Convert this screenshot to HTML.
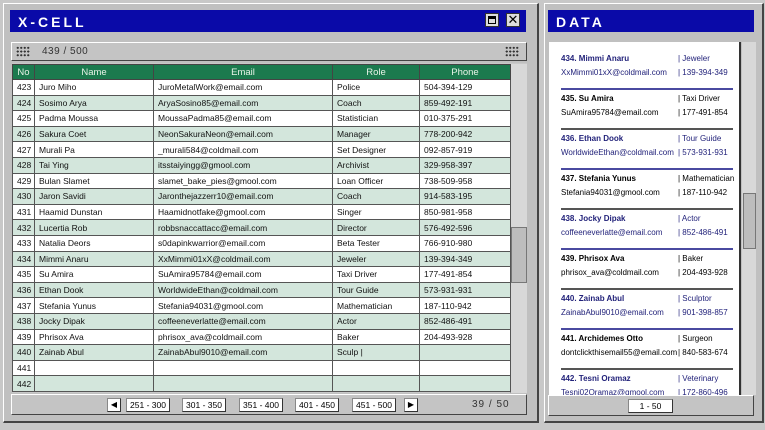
<!DOCTYPE html><html><head><style>
*{margin:0;padding:0;box-sizing:border-box}
body{width:765px;height:430px;background:#c8c8c8;font-family:"Liberation Sans",sans-serif;position:relative;overflow:hidden}
.a{position:absolute}
.win{background:#c0c0c0;border:1px solid #fff;border-right:2px solid #444;border-bottom:2px solid #444}
.title{background:#0a0aa8;color:#fff;font-weight:bold;font-size:14px;letter-spacing:3px;padding:4px 8px;font-family:"Liberation Sans",sans-serif}
table{border-collapse:collapse;font-size:8.5px;table-layout:fixed}
td{height:15.6px;border:1px solid #555;padding-left:4px;color:#111;white-space:nowrap;overflow:hidden}
th{background:#1b7a4e;color:#e8f4e8;font-weight:normal;font-size:9.5px;height:15px;border:1px solid #444}
tr.g td{background:#d3e6dc}tr.w td{background:#fff}
.btn{position:absolute;top:3px;height:14px;background:#fff;border:1px solid #888;border-right-color:#333;border-bottom-color:#333;font-size:8.5px;text-align:center;line-height:12px}
.it{position:absolute;left:12px;width:172px;font-size:8px;height:40px;border-bottom:2px solid #555}
.it.b{color:#22227a;border-bottom-color:#4a4aa0}
.it div{position:absolute;white-space:nowrap}
.grip{position:absolute;width:14px;height:11px;background-image:radial-gradient(circle,#333 1px,transparent 1.2px);background-size:3.5px 3.7px}
</style></head><body>
<div class="a win" style="left:3px;top:3px;width:536px;height:420px"></div>
<div class="a title" style="left:10px;top:10px;width:516px;height:22px">X-CELL</div>
<div class="a" style="left:485px;top:13px;width:14px;height:14px;background:#ddd;border:1px solid #333"><div class="a" style="left:2px;top:2px;width:8px;height:8px;border:1px solid #000;border-top-width:3px"></div></div>
<div class="a" style="left:506px;top:13px;width:14px;height:14px;background:#ddd;border:1px solid #333;font-size:13px;line-height:12px;text-align:center">✕</div>
<div class="a" style="left:11px;top:42px;width:516px;height:19px;background:#c4c4c4;border:1px solid #fff;border-right-color:#444;border-bottom-color:#444;font-size:10px;color:#333;line-height:17px;padding-left:30px;letter-spacing:0.5px">439 / 500</div>
<div class="grip" style="left:16px;top:46px"></div>
<div class="grip" style="left:505px;top:46px"></div>
<div class="a" style="left:12px;top:63px;width:515px;height:330px;background:#c8c8c8"></div>
<div class="a" style="left:510px;top:64px;width:17px;height:329px;background:#d8d8d8;border-left:1px solid #999"></div>
<div class="a" style="left:511px;top:227px;width:16px;height:56px;background:#bdbdbd;border:1px solid #777"></div>
<table class="a" style="left:12px;top:64px;width:498px">
<colgroup><col style="width:22px"><col style="width:119px"><col style="width:179px"><col style="width:87px"><col style="width:91px"></colgroup>
<tr><th>No</th><th>Name</th><th>Email</th><th>Role</th><th>Phone</th></tr>
<tr class="w"><td>423</td><td>Juro Miho</td><td>JuroMetalWork@email.com</td><td>Police</td><td>504-394-129</td></tr>
<tr class="g"><td>424</td><td>Sosimo Arya</td><td>AryaSosino85@email.com</td><td>Coach</td><td>859-492-191</td></tr>
<tr class="w"><td>425</td><td>Padma Moussa</td><td>MoussaPadma85@email.com</td><td>Statistician</td><td>010-375-291</td></tr>
<tr class="g"><td>426</td><td>Sakura Coet</td><td>NeonSakuraNeon@email.com</td><td>Manager</td><td>778-200-942</td></tr>
<tr class="w"><td>427</td><td>Murali Pa</td><td>_murali584@coldmail.com</td><td>Set Designer</td><td>092-857-919</td></tr>
<tr class="g"><td>428</td><td>Tai Ying</td><td>itsstaiyingg@gmool.com</td><td>Archivist</td><td>329-958-397</td></tr>
<tr class="w"><td>429</td><td>Bulan Slamet</td><td>slamet_bake_pies@gmool.com</td><td>Loan Officer</td><td>738-509-958</td></tr>
<tr class="g"><td>430</td><td>Jaron Savidi</td><td>Jaronthejazzerr10@email.com</td><td>Coach</td><td>914-583-195</td></tr>
<tr class="w"><td>431</td><td>Haamid Dunstan</td><td>Haamidnotfake@gmool.com</td><td>Singer</td><td>850-981-958</td></tr>
<tr class="g"><td>432</td><td>Lucertia Rob</td><td>robbsnaccattacc@email.com</td><td>Director</td><td>576-492-596</td></tr>
<tr class="w"><td>433</td><td>Natalia Deors</td><td>s0dapinkwarrior@email.com</td><td>Beta Tester</td><td>766-910-980</td></tr>
<tr class="g"><td>434</td><td>Mimmi Anaru</td><td>XxMimmi01xX@coldmail.com</td><td>Jeweler</td><td>139-394-349</td></tr>
<tr class="w"><td>435</td><td>Su Amira</td><td>SuAmira95784@email.com</td><td>Taxi Driver</td><td>177-491-854</td></tr>
<tr class="g"><td>436</td><td>Ethan Dook</td><td>WorldwideEthan@coldmail.com</td><td>Tour Guide</td><td>573-931-931</td></tr>
<tr class="w"><td>437</td><td>Stefania Yunus</td><td>Stefania94031@gmool.com</td><td>Mathematician</td><td>187-110-942</td></tr>
<tr class="g"><td>438</td><td>Jocky Dipak</td><td>coffeeneverlatte@email.com</td><td>Actor</td><td>852-486-491</td></tr>
<tr class="w"><td>439</td><td>Phrisox Ava</td><td>phrisox_ava@coldmail.com</td><td>Baker</td><td>204-493-928</td></tr>
<tr class="g"><td>440</td><td>Zainab Abul</td><td>ZainabAbul9010@email.com</td><td>Sculp |</td><td></td></tr>
<tr class="w"><td>441</td><td></td><td></td><td></td><td></td></tr>
<tr class="g"><td>442</td><td></td><td></td><td></td><td></td></tr>
</table>
<div class="a" style="left:11px;top:394px;width:516px;height:21px;background:#c4c4c4;border:1px solid #fff;border-right-color:#444;border-bottom-color:#444">
<div class="btn" style="left:95px;width:14px;font-size:8px">◀</div>
<div class="btn" style="left:114px;width:44px">251 - 300</div>
<div class="btn" style="left:170px;width:44px">301 - 350</div>
<div class="btn" style="left:227px;width:44px">351 - 400</div>
<div class="btn" style="left:283px;width:44px">401 - 450</div>
<div class="btn" style="left:340px;width:44px">451 - 500</div>
<div class="btn" style="left:392px;width:14px;font-size:8px">▶</div>
<div class="a" style="left:460px;top:4px;font-size:10px;color:#333;letter-spacing:1px">39 / 50</div>
</div>
<div class="a win" style="left:544px;top:3px;width:220px;height:420px"></div>
<div class="a title" style="left:548px;top:10px;width:206px;height:22px">DATA</div>
<div class="a" style="left:549px;top:42px;width:192px;height:353px;background:#fff;border-right:2px solid #333;overflow:hidden">
<div class="it b" style="top:8px"><div style="top:4px;font-weight:bold">434. Mimmi Anaru</div><div style="left:117px;top:4px">| Jeweler</div><div style="top:18px">XxMimmi01xX@coldmail.com</div><div style="left:117px;top:18px">| 139-394-349</div></div>
<div class="it" style="top:48px"><div style="top:4px;font-weight:bold">435. Su Amira</div><div style="left:117px;top:4px">| Taxi Driver</div><div style="top:18px">SuAmira95784@email.com</div><div style="left:117px;top:18px">| 177-491-854</div></div>
<div class="it b" style="top:88px"><div style="top:4px;font-weight:bold">436. Ethan Dook</div><div style="left:117px;top:4px">| Tour Guide</div><div style="top:18px">WorldwideEthan@coldmail.com</div><div style="left:117px;top:18px">| 573-931-931</div></div>
<div class="it" style="top:128px"><div style="top:4px;font-weight:bold">437. Stefania Yunus</div><div style="left:117px;top:4px">| Mathematician</div><div style="top:18px">Stefania94031@gmool.com</div><div style="left:117px;top:18px">| 187-110-942</div></div>
<div class="it b" style="top:168px"><div style="top:4px;font-weight:bold">438. Jocky Dipak</div><div style="left:117px;top:4px">| Actor</div><div style="top:18px">coffeeneverlatte@email.com</div><div style="left:117px;top:18px">| 852-486-491</div></div>
<div class="it" style="top:208px"><div style="top:4px;font-weight:bold">439. Phrisox Ava</div><div style="left:117px;top:4px">| Baker</div><div style="top:18px">phrisox_ava@coldmail.com</div><div style="left:117px;top:18px">| 204-493-928</div></div>
<div class="it b" style="top:248px"><div style="top:4px;font-weight:bold">440. Zainab Abul</div><div style="left:117px;top:4px">| Sculptor</div><div style="top:18px">ZainabAbul9010@email.com</div><div style="left:117px;top:18px">| 901-398-857</div></div>
<div class="it" style="top:288px"><div style="top:4px;font-weight:bold">441. Archidemes Otto</div><div style="left:117px;top:4px">| Surgeon</div><div style="top:18px">dontclickthisemail55@email.com</div><div style="left:117px;top:18px">| 840-583-674</div></div>
<div class="it b" style="top:328px"><div style="top:4px;font-weight:bold">442. Tesni Oramaz</div><div style="left:117px;top:4px">| Veterinary</div><div style="top:18px">Tesni02Oramaz@gmool.com</div><div style="left:117px;top:18px">| 172-860-496</div></div>
</div>
<div class="a" style="left:742px;top:42px;width:14px;height:353px;background:#d8d8d8"></div>
<div class="a" style="left:743px;top:193px;width:13px;height:56px;background:#bdbdbd;border:1px solid #777"></div>
<div class="a" style="left:548px;top:395px;width:206px;height:21px;background:#c4c4c4;border:1px solid #fff;border-right-color:#444;border-bottom-color:#444">
<div class="btn" style="left:79px;width:45px">1 - 50</div></div>
</body></html>
